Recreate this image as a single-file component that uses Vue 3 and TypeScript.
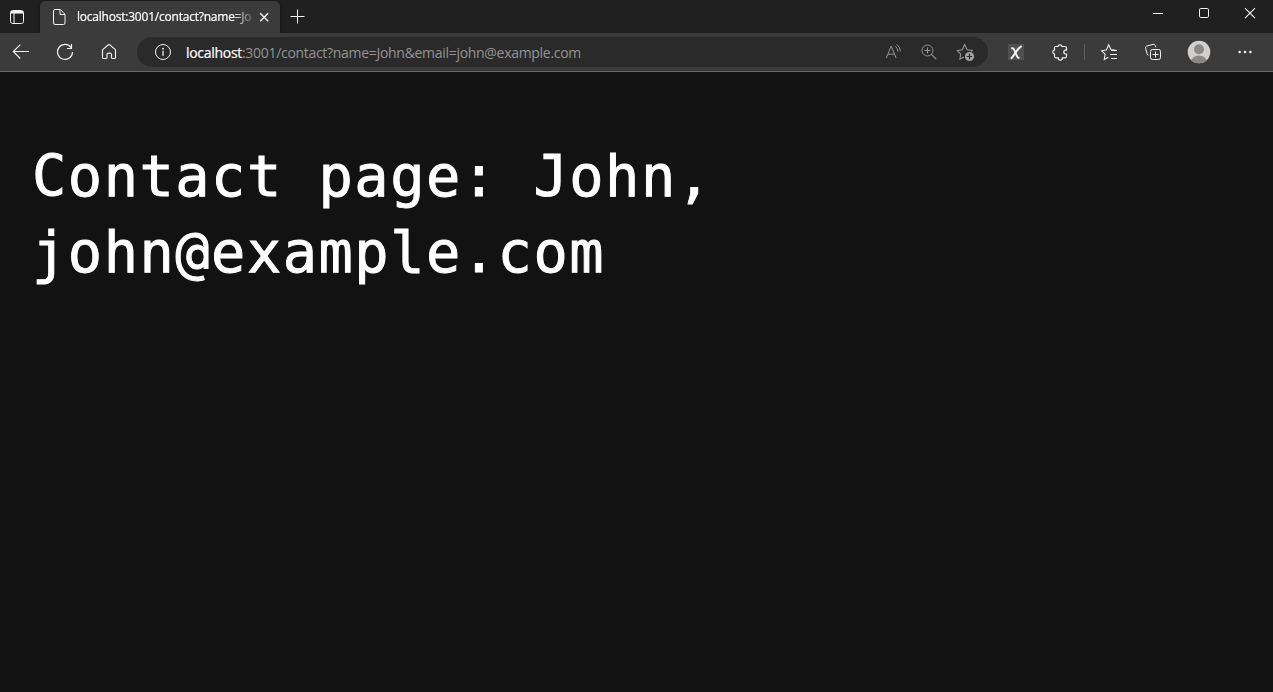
<script setup lang="ts">
import { ref } from 'vue'

const host = ref<string>('localhost')
const path = ref<string>(':3001/contact?name=John&email=john@example.com')
const tabTitle = ref<string>('localhost:3001/contact?name=Jo')
const contact = ref<{ name: string; email: string }>({ name: 'John', email: 'john@example.com' })
</script>

<template>
  <div class="window">
    <header class="tabs">
      <svg class="icon workspaces" viewBox="0 0 24 24">
        <rect x="5.5" y="5.5" width="13" height="13" rx="2.2" />
        <path d="M9 8.5v10" />
        <path d="M6 7.3h12" stroke-width="2.6" />
      </svg>
      <div class="tab">
        <svg class="icon page-icon" viewBox="0 0 24 24">
          <path d="M8 4.5h5.3l4.700 4.700v8.800a1.500 1.500 0 0 1-1.500 1.500H8A1.500 1.500 0 0 1 6.500 18V6A1.500 1.500 0 0 1 8 4.500M13 4.700v4.800h4.800" />
        </svg>
        <span class="tab-title">{{ tabTitle }}</span>
        <svg class="icon tab-close" viewBox="0 0 24 24"><path d="M8.200 8.200l8 8M16.200 8.200l-8 8" stroke-width="1.400" /></svg>
      </div>
      <svg class="icon new-tab" viewBox="0 0 24 24"><path d="M5.500 12.500h14M12.500 5.500v14" /></svg>
      <div class="controls">
        <svg class="icon" viewBox="0 0 24 24"><path d="M7 12.500h10" /></svg>
        <svg class="icon" viewBox="0 0 24 24"><rect x="7.500" y="7.500" width="9" height="9" rx="1.300" /></svg>
        <svg class="icon" viewBox="0 0 24 24"><path d="M7 7.200l10 10M17 7.200l-10 10" stroke-width="1.200" /></svg>
      </div>
    </header>

    <nav class="toolbar">
      <div class="nav-buttons">
        <svg class="icon" viewBox="0 0 24 24"><path d="M4.300 11.500h15.700M11.300 4.700L4.300 11.500l7 7" stroke-width="1.150" /></svg>
        <svg class="icon" viewBox="0 0 24 24"><path d="M18.200 7.700A7.500 7.500 0 1 0 19.500 12M18.500 4v4.500H14" stroke-width="1.200" /></svg>
        <svg class="icon" viewBox="0 0 24 24"><path d="M11.100 5a1.500 1.500 0 0 1 1.900 0l5 4.300q.500.500.500 1.200v7.100a.900.900 0 0 1-.900.900h-2.200a.900.900 0 0 1-.900-.900v-3a1.500 1.500 0 0 0-1.500-1.500h-1.500a1.500 1.500 0 0 0-1.500 1.500v3a.900.900 0 0 1-.900.900H6.400a.900.900 0 0 1-.900-.900v-7.100q0-.700.500-1.200z" stroke-width="1.150" /></svg>
      </div>

      <div class="address">
        <svg class="icon" viewBox="0 0 24 24">
          <circle cx="12" cy="12" r="7.500" />
          <path d="M12 10.800v5" stroke-width="1.300" />
          <circle class="solid" cx="12" cy="8.700" r=".9" />
        </svg>
        <div class="url"><span class="host">{{ host }}</span><span class="path">{{ path }}</span></div>
        <div class="address-tools">
          <svg class="icon" viewBox="0 0 24 24"><path d="M5.300 18L10.200 6l4.900 12M7 14.200h6.400M14.500 6.300q2.300 1.900 2.400 5.200M15.800 4.400q3.500 2.700 3.700 7" /></svg>
          <svg class="icon" viewBox="0 0 24 24"><circle cx="10.500" cy="10.500" r="5.500" /><path d="M14.500 14.500l4.700 4.700M7.500 10.500h6M10.500 7.500v6" stroke-width="1.150" /></svg>
          <svg class="icon" viewBox="0 0 24 24">
            <path d="M11 17.100l-4.100 2 .800-5.100-3.400-3.300 5-.900L11.700 4.600l2.400 5.200 5.100.700-1.200 1.400" stroke-width="1.100" />
            <circle class="solid" cx="16.500" cy="16.500" r="4.600" />
            <path class="cut" d="M13.800 16.500h5.400M16.500 13.800v5.400" />
          </svg>
        </div>
      </div>

      <div class="extensions">
        <svg class="icon" viewBox="0 0 24 24">
          <rect class="tile" x="4" y="4" width="16" height="16" />
          <path d="M7.200 8.300h1.400q.9 0 1.400 1.100l3.200 7.300q.5 1.100 1.400 1.100h.9" stroke-width="1.9" />
          <path d="M6.900 18.700Q10 15.500 12 12T17.600 6" stroke-width="2" />
        </svg>
        <svg class="icon" viewBox="0 0 24 24">
          <path d="M7.500 6.500h2.400a2.100 2.100 0 0 1 4.100 0h2.800a1.700 1.700 0 0 1 1.700 1.700v2h-.800a1.900 1.900 0 0 0 0 3.800h.800v2.200a1.600 1.600 0 0 1-1.700 1.600h-2.400v.300a2.100 2.100 0 0 1-4.200 0v-.300H8.100a1.600 1.600 0 0 1-1.600-1.600V14a2.100 2.100 0 0 1 0-4.100V7.500a1 1 0 0 1 1-1z" stroke-width="1.200" />
        </svg>
      </div>
      <i class="divider"></i>
      <div class="browser-tools">
        <svg class="icon" viewBox="0 0 24 24">
          <path d="M11.300 17.200l-4 2.200.800-5.200-3.500-3.400 4.800-.800 2.200-5.200 2.300 4.700 4.800.700" stroke-width="1.100" />
          <path d="M14 10.500h6M13.200 14.500H20M14 18.500h6" />
        </svg>
        <svg class="icon" viewBox="0 0 24 24">
          <path d="M7.600 15.300q-1.100-.100-1.500-1.500L4.600 8.200Q4.200 6.600 5.600 6.100l6.600-1.800q1.500-.300 2 1.200l.500 1.800" />
          <rect x="9.500" y="9.500" width="10" height="10" rx="2" />
          <path d="M11.500 14.500h6M14.500 11.500v6" />
        </svg>
      </div>
      <svg class="icon avatar" viewBox="0 0 24 24">
        <defs><clipPath id="avatar-circle"><circle cx="12" cy="12" r="11.300" /></clipPath></defs>
        <circle class="avatar-back" cx="12" cy="12" r="11.300" />
        <g class="avatar-person" clip-path="url(#avatar-circle)">
          <circle cx="12" cy="9.300" r="5" />
          <ellipse cx="12" cy="22" rx="8" ry="6.500" />
        </g>
      </svg>
      <svg class="icon more" viewBox="0 0 24 24">
        <g class="solid"><circle cx="6.600" cy="12" r="1.250" /><circle cx="12" cy="12" r="1.250" /><circle cx="17.400" cy="12" r="1.250" /></g>
      </svg>
    </nav>

    <main class="content">
      <h1>Contact page: {{ contact.name }}, {{ contact.email }}</h1>
    </main>
  </div>
</template>

<style>
body {
  background: #121212;
}
</style>

<style scoped>
.window {
  display: flex;
  flex-direction: column;
  height: 692px;
  overflow: hidden;
  background: #121212;
  font-family: "Open Sans", "Noto Sans", sans-serif;
}
.icon {
  display: block;
  flex: none;
  width: 24px;
  height: 24px;
  fill: none;
  stroke: #f2f2f2;
  stroke-width: 1;
}
.icon .solid {
  fill: #f2f2f2;
  stroke: none;
}
.tabs {
  display: flex;
  flex: none;
  height: 33px;
  background: #202020;
}
.workspaces {
  margin: 5px 0 0 5px;
}
.tab {
  display: flex;
  align-items: center;
  box-sizing: border-box;
  width: 240px;
  height: 32px;
  margin: 1px 0 0 11px;
  padding-left: 7px;
  border-radius: 5px 5px 0 0;
  background: #3b3b3b;
  box-shadow: 0 0 3px #111;
}
.tab-title {
  width: 174px;
  margin-left: 6px;
  overflow: hidden;
  color: #fff;
  font-size: 12px;
  line-height: 20px;
  letter-spacing: -0.22px;
  white-space: nowrap;
  -webkit-text-stroke: 0.2px #fff;
  mask-image: linear-gradient(to right, #000 155px, transparent 179px);
}
.tab-close {
  margin-left: 1px;
}
.new-tab {
  margin: 4px 0 0 5px;
}
.controls {
  display: flex;
  gap: 22px;
  margin: 1px 11px 0 auto;
}
.toolbar {
  display: flex;
  flex: none;
  align-items: center;
  box-sizing: border-box;
  height: 39px;
  padding-left: 9px;
  border-bottom: 1px solid #686868;
  background: #3b3b3b;
}
.nav-buttons,
.extensions,
.browser-tools {
  display: flex;
  gap: 20px;
}
.address {
  display: flex;
  align-items: center;
  box-sizing: border-box;
  width: 851px;
  height: 30px;
  margin: 0 16px;
  padding: 0 11px 0 14px;
  border-radius: 15px;
  background: #2a2a2a;
}
.url {
  flex: 1;
  margin-left: 11px;
  padding-top: 1px;
  font-size: 14px;
  line-height: 20px;
  letter-spacing: -0.3px;
  white-space: nowrap;
}
.host {
  color: #fff;
  -webkit-text-stroke: 0.2px #fff;
}
.path {
  color: #939393;
}
.address-tools {
  display: flex;
  gap: 12px;
}
.address-tools .icon {
  stroke: #949494;
}
.address-tools .solid {
  fill: #a2a2a2;
}
.address-tools .cut {
  stroke: #2a2a2a;
  stroke-width: 1.2;
}
.tile {
  fill: #505050;
  stroke: none;
}
.divider {
  width: 1px;
  height: 16px;
  margin: 0 12px;
  background: #626262;
}
.avatar {
  margin: 0 22px;
}
.avatar-back {
  fill: #d2d0ce;
  stroke: none;
}
.avatar-person {
  fill: #8a8886;
  stroke: none;
}
.content {
  flex: 1;
  padding: 66px 32px 0;
}
h1 {
  width: 760px;
  margin: 0;
  color: #fff;
  font-family: "DejaVu Sans Mono", monospace;
  font-size: 57px;
  font-weight: 400;
  line-height: 76px;
  letter-spacing: 1.5px;
  -webkit-text-stroke: 0.9px #fff;
}
</style>
